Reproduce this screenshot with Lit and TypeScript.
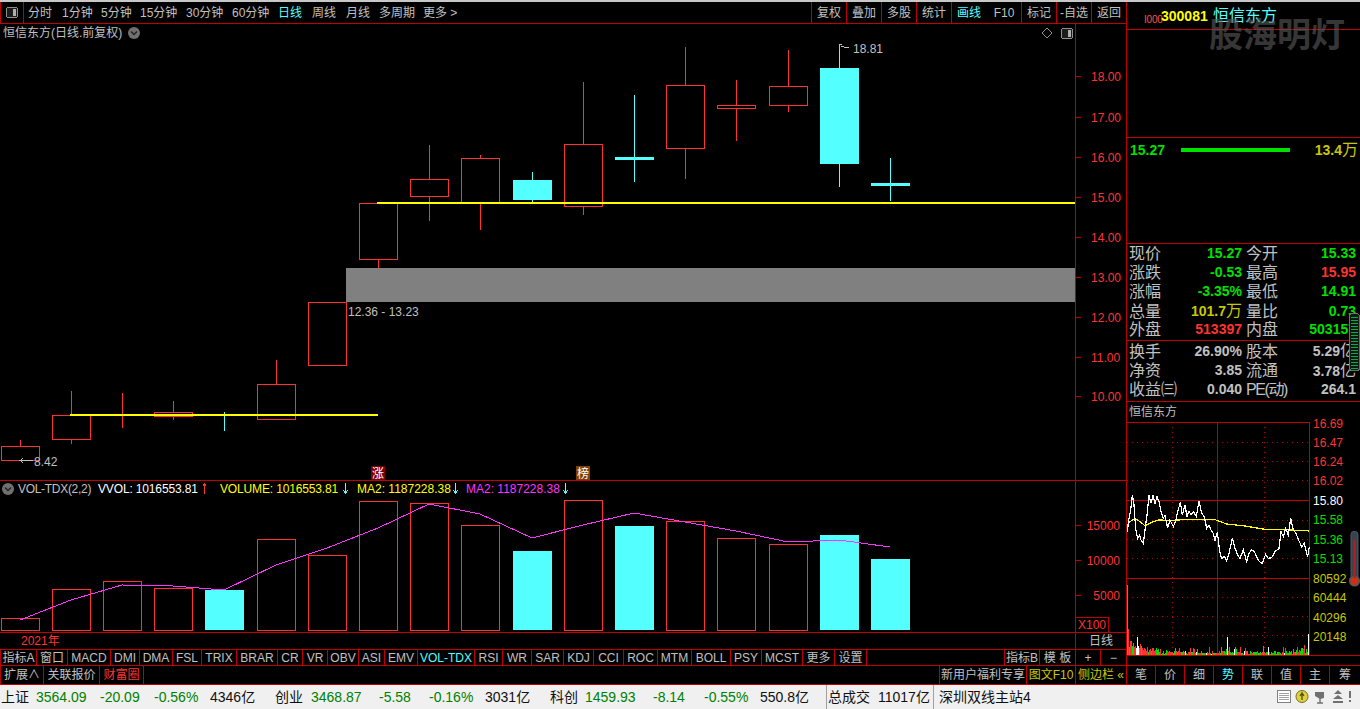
import { LitElement, html, css, svg } from "lit";
import { customElement } from "lit/decorators.js";

const RED = "#ff3232", CY = "#54ffff", LINE = "#c00000";
const candles: [number, number, number, number, number, boolean][] = [
  [1, 446, 460, 440, 460, false], [52, 415, 439, 391, 443, false], [103, 414, 415, 393, 427, false],
  [154, 412, 416, 401, 419, false], [205, 414, 415, 412, 430, true], [257, 384, 419, 360, 419, false],
  [308, 302, 365, 302, 365, false], [359, 203, 259, 203, 267, false], [410, 179, 196, 145, 220, false],
  [461, 158, 203, 155, 229, false], [513, 180, 199, 172, 202, true], [564, 144, 206, 82, 214, false],
  [615, 157, 159, 95, 181, true], [666, 85, 148, 47, 178, false], [717, 105, 108, 80, 140, false],
  [769, 86, 105, 50, 111, false], [820, 68, 163, 46, 186, true], [871, 183, 185, 158, 200, true],
];
const volTops = [618, 589, 581, 588, 590, 539, 555, 501, 503, 525, 551, 500, 526, 521, 538, 544, 535, 559];
const maLine = "20,620 71,600 122,585 173,586 224,590 276,565 327,548 378,528 429,504 480,514 532,538 583,525 634,513 685,522 736,531 788,542 839,540 890,547";
const priceAxis = [["18.00", 76], ["17.00", 117], ["16.00", 157], ["15.00", 197], ["14.00", 237], ["13.00", 277], ["12.00", 317], ["11.00", 357], ["10.00", 396]] as [string, number][];

const topItems: [string, number, boolean?][] = [
  ["分时", 34], ["1分钟", 39], ["5分钟", 39], ["15分钟", 46], ["30分钟", 46], ["60分钟", 46], ["日线", 34, true],
  ["周线", 34], ["月线", 33], ["多周期", 44], ["更多 >", 40],
];
const topRight: [string, string?][] = [["复权"], ["叠加"], ["多股"], ["统计"], ["画线", "cy"], ["F10", "nb"], ["标记"], ["-自选"], ["返回"]];
const tabStops = [36, 67, 110, 139, 172, 201, 236, 277, 302, 327, 358, 384, 417, 474, 502, 531, 563, 593, 623, 657, 691, 730, 761, 802, 834, 866];
const tabNames = ["指标A", "窗口", "MACD", "DMI", "DMA", "FSL", "TRIX", "BRAR", "CR", "VR", "OBV", "ASI", "EMV", "VOL-TDX", "RSI", "WR", "SAR", "KDJ", "CCI", "ROC", "MTM", "BOLL", "PSY", "MCST", "更多", "设置"];
const sideTabs = ["笔", "价", "细", "势", "联", "值", "主", "筹"];

const G = "g", K = "k";
const statusItems: [string, number, string][] = [
  ["上证", 35, K], ["3564.09", 64, G], ["-20.09", 54, G], ["-0.56%", 56, G], ["4346亿", 65, K],
  ["创业", 36, K], ["3468.87", 68, G], ["-5.58", 50, G], ["-0.16%", 56, G], ["3031亿", 65, K],
  ["科创", 35, K], ["1459.93", 68, G], ["-8.14", 51, G], ["-0.55%", 56, G], ["550.8亿", 66, K],
];

const quote1: [string, string, string, string, string, string][] = [
  ["现价", "15.27", "g", "今开", "15.33", "g"],
  ["涨跌", "-0.53", "g", "最高", "15.95", "r"],
  ["涨幅", "-3.35%", "g", "最低", "14.91", "g"],
  ["总量", "101.7|万", "y", "量比", "0.73", "g"],
  ["外盘", "513397", "r", "内盘", "503157", "g"],
];
const quote2: [string, string, string, string, string, string][] = [
  ["换手", "26.90%", "w", "股本", "5.29|亿", "w"],
  ["净资", "3.85", "w", "流通", "3.78|亿", "w"],
  ["收益㈢", "0.040", "w", "PE(动)", "264.1", "w"],
];

const miniLabels: [string, number, string][] = [
  ["16.69", 423, "r"], ["16.47", 442, "r"], ["16.24", 461, "r"], ["16.02", 480, "r"], ["15.80", 500, "w"],
  ["15.58", 519, "g"], ["15.36", 539, "g"], ["15.13", 558, "g"], ["80592", 578, "y"], ["60444", 597, "y"],
  ["40296", 617, "y"], ["20148", 636, "y"],
];
const z = (pts: number[][]) => pts.map(([x, y]) => `${1125 + x / 3},${415 + y / 3}`).join(" ");
const white = z([[7,350],[12,310],[17,285],[22,240],[27,270],[32,340],[38,370],[44,360],[48,375],[55,385],[60,345],[66,300],[72,240],[78,265],[84,240],[90,265],[96,245],[102,260],[108,290],[115,310],[120,300],[128,340],[135,315],[145,335],[152,318],[158,290],[166,262],[172,300],[180,270],[186,305],[192,288],[198,300],[206,290],[214,305],[222,258],[230,295],[238,305],[245,340],[252,330],[258,345],[265,355],[270,378],[277,350],[284,410],[290,430],[298,425],[305,437],[312,415],[322,370],[330,400],[338,420],[345,430],[355,405],[365,440],[372,415],[380,405],[388,410],[395,425],[403,440],[412,445],[422,418],[430,430],[440,428],[450,410],[462,400],[468,350],[475,365],[482,340],[490,360],[497,310],[505,345],[513,355],[522,378],[530,395],[538,385],[548,425],[553,395]]);
const avg = z([[7,330],[15,320],[30,310],[45,320],[60,332],[80,322],[100,315],[140,316],[200,313],[270,314],[305,327],[360,333],[420,343],[500,345],[553,348]]);

function miniBars() {
  let n = 1;
  const r = () => { const v = Math.sin(n++ * 12.9898) * 43758.5453; return v - Math.floor(v); };
  const out: { x: number; h: number; c: string }[] = [];
  for (let x = 1127; x < 1309; x++) {
    const i = x - 1127;
    let h = 1 + r() * 3;
    if (i < 34) h = 3 + r() * (16 * Math.exp(-i / 22));
    else if (r() > 0.84) h = 4 + r() * 5;
    if (i > 168) h += r() * 6;
    const t = r();
    let c = t < 0.46 ? RED : t < 0.94 ? "#00e000" : "#ffffff";
    if (i === 0) { h = 70; c = "#00e000"; }
    if (i === 1) { h = 26; c = RED; }
    if (x === 1137 || x === 1227 || x === 1308) { h = x === 1308 ? 21 : 18; c = "#ffffff"; }
    out.push({ x, h: Math.round(h), c });
  }
  return out;
}

@customElement("app-root")
export class AppRoot extends LitElement {
  static styles = css`
    :host { display: block; width: 1360px; height: 709px; overflow: hidden; background: #000; color: #c0c0c0;
      font: 12px/16px "Liberation Sans", "Noto Sans CJK SC", sans-serif; }
    * { box-sizing: border-box; }
    svg { display: block; }
    svg text { font: 12px "Liberation Sans", "Noto Sans CJK SC", sans-serif; fill: #c0c0c0; }
    svg .t-r { fill: #ff3232; } svg .t-g { fill: #00e000; } svg .t-w { fill: #fff; } svg .t-y { fill: #c8c800; }
    svg .t-yy { fill: #ff0; } svg .t-m { fill: #ff32ff; }
    svg .tight { letter-spacing: -0.15px; }
    svg .tighter { letter-spacing: -0.3px; }
    .crisp { shape-rendering: crispEdges; }
    .strip { height: 2px; background: #c8c8c8; }
    .main { display: flex; height: 683px; }
    .left { width: 1127px; border-right: 1px solid #c00000; display: flex; flex-direction: column; flex: none; }
    .side { width: 233px; flex: none; display: flex; flex-direction: column; position: relative; overflow: hidden; }

    .toolbar { height: 22px; flex: none; display: flex; align-items: stretch; border-bottom: 1px solid #c00000; border-left: 1px solid #c00000; }
    .tool-icon { width: 23px; border-right: 1px solid #c00000; display: flex; align-items: center; justify-content: center; margin-right: 4px; padding-right: 1px; }
    .tool-item { display: flex; align-items: center; white-space: nowrap; flex: none; }
    .cy { color: #54ffff; }
    .tool-right { margin-left: auto; display: flex; }
    .tool-cell { width: 35px; border-left: 1px solid #c00000; display: flex; align-items: center; justify-content: center; white-space: nowrap; }
    .tool-cell.nb { border-left-color: transparent; }

    .pane { position: relative; flex: none; }
    .chart { height: 457px; border-bottom: 1px solid #c00000; }
    .vol { height: 152px; border-bottom: 1px solid #c00000; }
    .chart-title { position: absolute; left: 3px; top: 1px; display: flex; align-items: center; gap: 6px; line-height: 16px; }
    .chart-tools { position: absolute; left: 1041px; top: 3px; display: flex; align-items: center; gap: 8px; }

    .date-row { height: 17px; flex: none; display: flex; align-items: center; border-bottom: 1px solid #c00000; }
    .date { width: 1076px; padding-left: 21px; color: #ff3232; align-self: stretch; display: flex; align-items: center; border-right: 1px solid #c00000; }
    .day { flex: 1; text-align: center; }
    .tabs { height: 16px; flex: none; display: flex; border-bottom: 1px solid #c00000; border-left: 1px solid #c00000; }
    .tab { flex: none; border-right: 1px solid #c00000; display: flex; align-items: center; justify-content: center; white-space: nowrap; overflow: hidden; line-height: 14px; font-size: 12px; }
    .bl { border-left: 1px solid #c00000; }
    .nbr { border-right: none; }
    .tabs-right { margin-left: auto; display: flex; }
    .row2 { height: 19px; flex: none; display: flex; border-bottom: 1px solid #c00000; }
    .row2-right { margin-left: auto; display: flex; }
    .hot { color: #ff3232; }
    .gold { color: #c8c800; }

    .head { height: 28px; flex: none; border-bottom: 1px solid #c00000; display: flex; align-items: center; padding: 0 0 0 17px; white-space: nowrap; }
    .head-flag { color: #ff5050; font-size: 10px; width: 17px; padding-top: 9px; letter-spacing: -0.2px; }
    .head-code { color: #ff0; font-weight: 700; font-size: 14px; width: 52px; }
    .head-name { color: #54ffff; font-size: 16px; line-height: 20px; }
    .mark { position: absolute; left: 82px; top: 7px; font-size: 34px; line-height: 48px; font-weight: 700; color: rgba(92, 92, 92, 0.62); white-space: nowrap; font-family: "Noto Sans CJK SC", sans-serif; }
    .blank { height: 108px; flex: none; border-bottom: 1px solid #c00000; }
    .tick { height: 106px; flex: none; border-bottom: 1px solid #c00000; display: grid; grid-template-columns: 51px 109px 1fr; align-content: start; align-items: center; padding: 4px 2px 0 3px; font: 700 14px/16px "Liberation Sans", "Noto Sans CJK SC", sans-serif; }
    .tick-price { color: #00e000; }
    .tick-bar { height: 4px; background: #00e000; }
    .tick-vol { color: #c8c800; text-align: right; white-space: nowrap; }
    .unit { font-weight: 400; font-size: 16px; }
    .quote { flex: none; border-bottom: 1px solid #c00000; overflow: hidden; }
    .q1 { height: 97px; }
    .q2 { height: 61px; }
    .q-row { display: grid; grid-template-columns: 32px 81px 32px 82px; padding-left: 2px; align-items: center; white-space: nowrap; }
    .q1 .q-row { height: 19px; }
    .q2 .q-row { height: 19.5px; }
    .q-label { font-size: 16px; line-height: 19px; }
    .q-label.pe { letter-spacing: -1.4px; }
    .q-val { font-weight: 700; font-size: 14px; line-height: 19px; text-align: right; }
    .q-gap { margin-left: 4px; }
    .v-g { color: #00e000; } .v-r { color: #ff3232; } .v-y { color: #c8c800; } .v-w { color: #c0c0c0; }
    .mini-title { height: 20px; flex: none; padding-left: 2px; display: flex; align-items: center; }
    .mini { height: 234px; flex: none; border-bottom: 1px solid #c00000; }
    .mini svg { overflow: visible; }
    .gap { height: 10px; flex: none; border-bottom: 1px solid #c00000; }
    .side-tabs { height: 19px; flex: none; display: grid; grid-template-columns: repeat(7, 29px) 1fr; border-bottom: 1px solid #c00000; }
    .side-tabs .tab { height: 18px; }
    .side-tabs .tab:last-child { border-right: none; }
    .therm-a { position: absolute; left: 222px; top: 311px; }
    .therm-b { position: absolute; left: 222px; top: 529px; }

    .status { height: 24px; background: #f0f0f0; color: #101010; display: flex; align-items: center; font-size: 14px; line-height: 20px; white-space: nowrap; padding-left: 1px; }
    .st { flex: none; }
    .st-g { color: #008000; }
    .st-k { color: #101010; }
    .st-total { width: 51px; padding-left: 1px; }
    .st-sum { width: 55px; }
    .st-server { padding-left: 5px; }
    .divider { width: 1px; height: 24px; background: #a0a0a0; flex: none; }
    .st-icons { margin-left: auto; margin-right: 5px; }
  `;

  private winIcon() {
    return html`<svg width="12" height="11" viewBox="0 0 12 11" class="crisp">
      <rect x="0.5" y="0.5" width="11" height="10" rx="2" fill="#1c1c1c" stroke="#909090"></rect>
      <rect x="7" y="2" width="3" height="7" fill="#b0b0b0"></rect></svg>`;
  }

  private chart() {
    return html`<svg width="1126" height="456" viewBox="0 24 1126 456">
      <g class="crisp">
        <rect x="346" y="268" width="729" height="34" fill="#808080"></rect>
        ${candles.map(([l, t, b, hi, lo, c]) => {
          const col = c ? CY : RED, m = l + 19.5;
          return svg`
            <line x1=${m} x2=${m} y1=${hi} y2=${t} stroke=${col}></line>
            <line x1=${m} x2=${m} y1=${b} y2=${lo + 1} stroke=${col}></line>
            ${c
              ? svg`<rect x=${l} y=${t} width="39" height=${b - t + 1} fill=${col}></rect>`
              : svg`<rect x=${l + 0.5} y=${t + 0.5} width="38" height=${b - t} fill="none" stroke=${col}></rect>`}`;
        })}
        <rect x="377" y="202" width="698" height="2" fill="#ff0"></rect>
        <rect x="70" y="414" width="308" height="2" fill="#ff0"></rect>
        <line x1="1075.5" x2="1075.5" y1="24" y2="480" stroke=${LINE}></line>
        ${priceAxis.map(([, y]) => svg`<line x1="1075" x2="1081" y1=${y + 0.5} y2=${y + 0.5} stroke=${LINE}></line>`)}
        <path d="M20 460.5h13M23 458.5l-3 2 3 2" fill="none" stroke="#c0c0c0"></path>
        <path d="M839.5 50V44.5h2M841 46l4 1.5 4 0.5" fill="none" stroke="#c0c0c0"></path>
      </g>
      ${priceAxis.map(([t, y]) => svg`<text class="t-r" x="1091" y=${y + 5}>${t}</text>`)}
      <text x="348" y="316">12.36 - 13.23</text>
      <text x="34" y="466">8.42</text>
      <text x="853" y="53">18.81</text>
      <rect x="371" y="466" width="14" height="14" fill="#800000"></rect>
      <text class="t-w" x="372" y="478">涨</text>
      <rect x="576" y="466" width="14" height="14" fill="#804000"></rect>
      <text class="t-w" x="577" y="478">榜</text>
    </svg>`;
  }

  private volume() {
    const arrow = (x: number, up: boolean, c: string) =>
      up ? svg`<path d="M${x}.5 494V484M${x - 2}.5 486.5l2-3 2 3" fill="none" stroke=${c}></path>`
         : svg`<path d="M${x}.5 483V493M${x - 2}.5 490.5l2 3 2-3" fill="none" stroke=${c}></path>`;
    return html`<svg width="1126" height="151" viewBox="0 481 1126 151">
      <g class="crisp">
        ${candles.map(([l, , , , , c], i) => c
          ? svg`<rect x=${l} y=${volTops[i]} width="39" height=${630 - volTops[i]} fill=${CY}></rect>`
          : svg`<rect x=${l + 0.5} y=${volTops[i] + 0.5} width="38" height=${630 - volTops[i]} fill="none" stroke=${RED}></rect>`)}
        <polyline points=${maLine} fill="none" stroke="#ff32ff"></polyline>
        <line x1="1075.5" x2="1075.5" y1="481" y2="632" stroke=${LINE}></line>
        ${[525, 560, 595].map((y) => svg`<line x1="1075" x2="1081" y1=${y + 0.5} y2=${y + 0.5} stroke=${LINE}></line>`)}
        <rect x="1075.5" y="617.5" width="33" height="15" fill="#000" stroke=${LINE}></rect>
        ${arrow(204, true, RED)}${arrow(345, false, CY)}${arrow(455, false, CY)}${arrow(565, false, CY)}
      </g>
      <circle cx="8" cy="489" r="6" fill="#707070"></circle>
      <path d="M5 487.5l3 3 3-3" fill="none" stroke="#222" stroke-width="1.4"></path>
      <text class="tighter" x="18" y="493">VOL-TDX(2,2)</text>
      <text class="t-w tight" x="98" y="493">VVOL: 1016553.81</text>
      <text class="t-yy tight" x="220" y="493">VOLUME: 1016553.81</text>
      <text class="t-yy" x="357" y="493">MA2: 1187228.38</text>
      <text class="t-m" x="466" y="493">MA2: 1187228.38</text>
      <text class="t-r" x="1120" y="530" text-anchor="end">15000</text>
      <text class="t-r" x="1120" y="565" text-anchor="end">10000</text>
      <text class="t-r" x="1120" y="600" text-anchor="end">5000</text>
      <text class="t-r" x="1078" y="629">X100</text>
    </svg>`;
  }

  private miniChart() {
    const hs = [442, 461, 480, 520, 539, 558, 597, 616, 635];
    return html`<svg width="233" height="233" viewBox="1127 422 233 233">
      <g class="crisp">
        ${hs.map((y) => svg`<line x1="1127" x2="1309" y1=${y + 0.5} y2=${y + 0.5} stroke=${LINE} stroke-dasharray="1 4"></line>`)}
        ${[1172, 1264].map((x) => svg`<line x1=${x + 0.5} x2=${x + 0.5} y1="422" y2="655" stroke=${LINE} stroke-dasharray="1 4"></line>`)}
        <line x1="1217.5" x2="1217.5" y1="422" y2="655" stroke=${LINE}></line>
        <line x1="1127" x2="1310" y1="422.5" y2="422.5" stroke=${LINE}></line>
        <line x1="1127" x2="1310" y1="500.5" y2="500.5" stroke=${LINE}></line>
        <line x1="1127" x2="1310" y1="578.5" y2="578.5" stroke=${LINE}></line>
        <line x1="1309.5" x2="1309.5" y1="422" y2="655" stroke=${LINE}></line>
        <polyline points=${avg} fill="none" stroke="#ff0" stroke-width="1.2"></polyline>
        <polyline points=${white} fill="none" stroke="#fff" stroke-width="1.2"></polyline>
        ${miniBars().map((b) => svg`<rect x=${b.x} y=${655 - b.h} width="1" height=${b.h} fill=${b.c}></rect>`)}
      </g>
      ${miniLabels.map(([t, y, c]) => svg`<text class="t-${c}" x="1313" y=${y + 4.5}>${t}</text>`)}
    </svg>`;
  }

  private val(v: string) {
    const [n, u] = v.split("|");
    return u ? html`${n}<span class="unit">${u}</span>` : n;
  }

  private quote(rows: typeof quote1, cls: string) {
    return html`<div class="quote ${cls}">
      ${rows.map((r) => html`<div class="q-row">
        <div class="q-label">${r[0]}</div>
        <div class="q-val v-${r[2]}">${this.val(r[1])}</div>
        <div class="q-label q-gap ${r[3].startsWith("PE") ? "pe" : ""}">${r[3]}</div>
        <div class="q-val v-${r[5]}">${this.val(r[4])}</div>
      </div>`)}
    </div>`;
  }

  render() {
    return html`
      <div class="strip"></div>
      <div class="main">
        <div class="left">
          <div class="toolbar">
            <div class="tool-icon">${this.winIcon()}</div>
            ${topItems.map(([t, w, c]) => html`<div class="tool-item ${c ? "cy" : ""}" style="width:${w}px">${t}</div>`)}
            <div class="tool-right">
              ${topRight.map(([t, c]) => html`<div class="tool-cell ${c ?? ""}">${t}</div>`)}
            </div>
          </div>
          <div class="pane chart">
            ${this.chart()}
            <div class="chart-title">
              <span>恒信东方(日线.前复权)</span>
              <svg width="12" height="12" viewBox="0 0 12 12"><circle cx="6" cy="6" r="6" fill="#707070"></circle><path d="M3 4.5l3 3 3-3" fill="none" stroke="#222" stroke-width="1.4"></path></svg>
            </div>
            <div class="chart-tools">
              <svg width="12" height="12" viewBox="0 0 12 12"><path d="M6 1l5 5-5 5-5-5z" fill="none" stroke="#909090"></path></svg>
              ${this.winIcon()}
            </div>
          </div>
          <div class="pane vol">${this.volume()}</div>
          <div class="date-row"><div class="date">2021年</div><div class="day">日线</div></div>
          <div class="tabs">
            ${tabNames.map((t, i) => html`<div class="tab ${t === "VOL-TDX" ? "cy" : ""}" style="width:${tabStops[i] - (i ? tabStops[i - 1] : 0)}px">${t}</div>`)}
            <div class="tabs-right">
              <div class="tab bl" style="width:36px">指标B</div>
              <div class="tab" style="width:36px">模 板</div>
              <div class="tab" style="width:25px">+</div>
              <div class="tab nbr" style="width:25px">−</div>
            </div>
          </div>
          <div class="row2">
            <div class="tab bl" style="width:44px">扩展∧</div>
            <div class="tab" style="width:56px">关联报价</div>
            <div class="tab hot" style="width:44px">财富圈</div>
            <div class="row2-right">
              <div class="tab bl" style="width:88px">新用户福利专享</div>
              <div class="tab gold" style="width:49px">图文F10</div>
              <div class="tab gold nbr" style="width:50px">侧边栏 «</div>
            </div>
          </div>
        </div>
        <div class="side">
          <div class="head">
            <span class="head-flag">I000</span><span class="head-code">300081</span><span class="head-name">恒信东方</span>
          </div>
          <div class="blank"></div>
          <div class="tick">
            <span class="tick-price">15.27</span><span class="tick-bar"></span>
            <span class="tick-vol">13.4<span class="unit">万</span></span>
          </div>
          ${this.quote(quote1, "q1")}
          ${this.quote(quote2, "q2")}
          <div class="mini-title">恒信东方</div>
          <div class="mini">${this.miniChart()}</div>
          <div class="gap"></div>
          <div class="side-tabs">${sideTabs.map((t) => html`<div class="tab ${t === "势" ? "cy" : ""}">${t}</div>`)}</div>
          <div class="mark">股海明灯</div>
          <svg class="therm-a crisp" width="11" height="58" viewBox="0 0 11 58">
            <rect x="0.5" y="0.5" width="10" height="57" rx="3" fill="#101810" stroke="#707070"></rect>
            ${Array.from({ length: 18 }, (_, i) => svg`<rect x="2" y=${4 + i * 3} width="7" height="1" fill="#00b050"></rect>`)}
          </svg>
          <svg class="therm-b" width="12" height="57" viewBox="0 0 12 57">
            <rect x="2" y="0.5" width="7" height="48" rx="3" fill="#39434d" stroke="#4d5862"></rect>
            <circle cx="5.5" cy="50" r="5.6" fill="#4d5862"></circle>
            <circle cx="5.5" cy="50" r="4" fill="#d03010"></circle>
            <rect x="4.5" y="9" width="2" height="38" fill="#b02020"></rect>
          </svg>
        </div>
      </div>
      <div class="status">
        ${statusItems.map(([t, w, c]) => html`<div class="st st-${c}" style="width:${w}px">${t}</div>`)}
        <div class="divider"></div>
        <div class="st st-total">总成交</div>
        <div class="st st-sum">11017亿</div>
        <div class="divider"></div>
        <div class="st st-server">深圳双线主站4</div>
        <svg class="st-icons" width="80" height="16" viewBox="0 0 80 16">
          <rect x="2.5" y="1.5" width="13" height="12" fill="#fff" stroke="#808080"></rect>
          <path d="M4 4.5h10M4 6.5h10M4 8.5h10M4 10.5h10" stroke="#a0a0a0"></path>
          <circle cx="27" cy="7.5" r="6" fill="#e0d040" stroke="#707020"></circle>
          <path d="M27 11V5M25 7l2-3 2 3" fill="none" stroke="#505010" stroke-width="1.3"></path>
          <path d="M40 3l9 0 0 6-4 1-5-3z" fill="#707070"></path><path d="M45 9v5M42 14h6" stroke="#707070" stroke-width="1.4"></path>
          <path d="M63 1l4 4h-8zM63 6l5 4h-10zM58 12h10v2h-10z" fill="#707070"></path>
          <path d="M75 2v7M75 11v2" stroke="#707070" stroke-width="2"></path>
        </svg>
      </div>
    `;
  }
}
